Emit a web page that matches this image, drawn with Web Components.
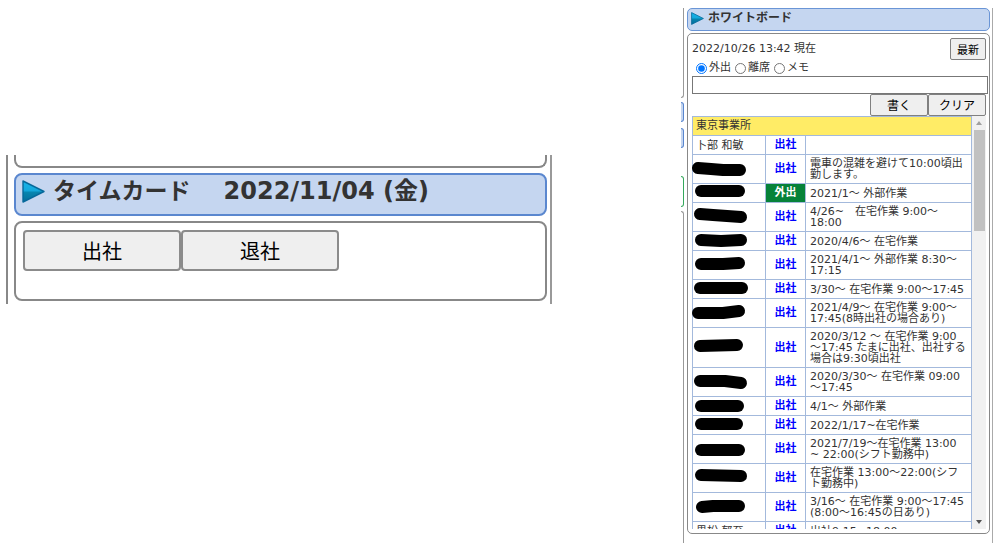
<!DOCTYPE html>
<html lang="ja">
<head>
<meta charset="utf-8">
<title>ホワイトボード</title>
<style>
body { margin: 0; background: #fff; color: #333; font-family: "DejaVu Sans", "Noto Sans CJK JP", sans-serif; }
</style>
</head>
<body>
<portal-page></portal-page>

<template id="t-page">
<style>
:host { display: grid; grid-template-columns: minmax(0, 546fr) minmax(0, 312fr); column-gap: 129px; align-items: start; padding: 8px 7px 8px 6px; }
time-card { margin-top: 147px; }
</style>
<time-card></time-card>
<white-board></white-board>
</template>

<template id="t-title">
<style>
:host { display: flex; align-items: flex-start; box-sizing: border-box; border: 1px solid #6a95d6; border-radius: 5px; background: #c5d6f0; height: 23px; padding: 2px 3px; gap: 4px; font-size: 12px; line-height: 14px; font-weight: 700; white-space: nowrap; }
:host([large]) { border: 2px solid #5a87cf; border-radius: 8px; height: 43px; padding: 3px 6px; gap: 8px; font-size: 23px; line-height: 26px; }
svg { flex: none; width: 13px; height: 13px; margin-top: 1px; }
:host([large]) svg { width: 23px; height: 23px; margin-top: 2px; }
h2 { margin: 0; font: inherit; }
</style>
<svg viewBox="0 0 23 23" aria-hidden="true">
<defs><linearGradient id="g" x1="0" y1="0" x2="0" y2="1"><stop offset="0" stop-color="#14b4ea"/><stop offset=".45" stop-color="#14a8dc"/><stop offset=".55" stop-color="#0784ae"/><stop offset="1" stop-color="#056f9b"/></linearGradient></defs>
<path d="M1 1 L22 11.5 L1 22 Z" fill="url(#g)" stroke="#07699b" stroke-width="1.4" stroke-linejoin="round"/>
</svg>
<h2><slot></slot></h2>
</template>

<template id="t-card">
<style>
:host { display: flex; flex-direction: column; gap: 5px; box-sizing: border-box; border: 2px solid #999; border-width: 0 2px; padding: 0 3px 3px 6px; border-left-color: #888; }
.prev { height: 11px; border: 2px solid #888; border-top: 0; border-radius: 0 0 8px 8px; }
.body { display: flex; box-sizing: border-box; height: 80px; border: 2px solid #888; border-radius: 8px; padding: 7px; align-items: flex-start; }
button { flex: 0 1 158px; min-width: 0; box-sizing: border-box; height: 41px; padding: 0; border: 2px solid #8b8b8b; border-radius: 4px; background: #efefef; color: #000; font: 20px/28px "Noto Sans CJK JP", sans-serif; }
.date { font-size: 24px; margin-left: 10px; }
</style>
<div class="prev"></div>
<widget-title large>タイムカード　<span class="date">2022/11/04 (金)</span></widget-title>
<div class="body"><button type="button">出社</button><button type="button">退社</button></div>
</template>

<template id="t-board">
<style>
:host { display: flex; gap: 3px; height: 535px; box-sizing: border-box; border-right: 1px solid #aaa; padding-right: 2px; }
.strip { display: flex; flex-direction: column; flex: none; width: 3px; }
.strip div { border: 1px solid #999; border-left: 0; border-radius: 0 4px 4px 0; box-sizing: border-box; }
.strip .a { height: 90px; border-top: 0; border-top-right-radius: 0; }
.strip .b { height: 20px; margin-top: 4px; border-color: #5a87cf; background: #c5d6f0; }
.strip .c { height: 20px; margin-top: 6px; border-color: #5a87cf; background: #c5d6f0; }
.strip .d { height: 31px; margin-top: 28px; border-color: #35a85c; }
.strip .e { flex: 1; margin-top: 4px; border-bottom: 0; border-bottom-right-radius: 0; }
.main { flex: 1; min-width: 0; }
.body { margin-top: 2px; border: 1px solid #888; border-radius: 5px; padding: 4px 1px 4px 4px; font-size: 11px; line-height: 14px; }
.row { display: flex; justify-content: space-between; align-items: center; padding-right: 2px; }
.radios { display: flex; align-items: center; height: 16px; padding-left: 4px; gap: 4px; }
label { display: flex; align-items: center; gap: 2px; }
input[type=radio] { margin: 0; width: 11px; height: 11px; accent-color: #0075ff; }
input[type=text] { display: block; box-sizing: border-box; width: 100%; height: 18px; border: 1px solid #777; padding: 0 2px; font: inherit; }
button { box-sizing: border-box; height: 22px; padding: 0; border: 1px solid #808080; border-radius: 2px; background: #efefef; color: #000; font: 12px/16px "Noto Sans CJK JP", sans-serif; }
.now { width: 36px; font-size: 11px; }
.acts { display: flex; justify-content: flex-end; padding-right: 2px; }
.acts button { width: 58px; }
.list { display: flex; height: 413px; overflow: hidden; padding-right: 2px; }
status-table { flex: 1; min-width: 0; }
.bar { flex: none; width: 14px; background: #f1f1f1; display: flex; flex-direction: column; align-items: center; }
.bar i { flex: none; border: 3px solid transparent; border-top-width: 0; border-bottom: 4px solid #a0a0a0; margin: 5px 0; }
.bar b { width: 11px; height: 101px; background: #c1c1c1; }
.bar i.dn { margin-top: auto; border-bottom-width: 0; border-top: 4px solid #505050; }
</style>
<div class="strip"><div class="a"></div><div class="b"></div><div class="c"></div><div class="d"></div><div class="e"></div></div>
<div class="main">
<widget-title>ホワイトボード</widget-title>
<div class="body">
<div class="row"><span>2022/10/26 13:42 現在</span><button class="now" type="button">最新</button></div>
<div class="radios">
<label><input type="radio" name="kind" checked>外出</label>
<label><input type="radio" name="kind">離席</label>
<label><input type="radio" name="kind">メモ</label>
</div>
<input type="text" aria-label="内容">
<div class="acts"><button type="button">書く</button><button type="button">クリア</button></div>
<div class="list"><status-table></status-table><div class="bar"><i></i><b></b><i class="dn"></i></div></div>
</div>
</div>
</template>

<template id="t-table">
<style>
:host { display: block; }
table { width: 100%; border-collapse: collapse; table-layout: fixed; font-size: 11px; line-height: 11px; }
col.n { width: 73px; } col.s { width: 40px; }
td, th { border: 1px solid #a3b9dc; padding: 3px 4px; text-align: left; font-weight: 400; white-space: nowrap; color: #333; }
td:first-child, th { padding-left: 3px; }
thead th { background: #ffec66; }
th, td.st { line-height: 12px; }
td.nm { position: relative; }
td.st { text-align: center; color: #00f; font-weight: 700; padding-left: 0; padding-right: 0; }
td.out { background: #068239; color: #fff; }
svg { position: absolute; left: 0; top: 0; width: 73px; height: 100%; overflow: visible; }
path { fill: none; stroke: #000; stroke-width: 12; stroke-linecap: round; stroke-linejoin: round; }
</style>
<table>
<colgroup><col class="n"><col class="s"><col></colgroup>
<thead><tr><th colspan="3">東京事業所</th></tr></thead>
<tbody></tbody>
</table>
</template>

<script>
const define = (name, id, init) => customElements.define(name, class extends HTMLElement {
  constructor() {
    super();
    const root = this.attachShadow({ mode: "open" });
    root.append(document.getElementById(id).content.cloneNode(true));
    if (init) init(root);
  }
});

// name (or the marker stroke that hides it), status, note lines
const rows = [
  ["卜部 和敏", "出社", ""],
  [{ d: "M5 13 L18 14 L30 15 L47 15" }, "出社", "電車の混雑を避けて10:00頃出|勤します。"],
  [{ d: "M8 7 L46 7" }, "外出", "2021/1〜 外部作業"],
  [{ d: "M7 11 L20 12 L48 14" }, "出社", "4/26~　在宅作業 9:00〜|18:00"],
  [{ d: "M8 8 L28 9 L48 8" }, "出社", "2020/4/6〜 在宅作業"],
  [{ d: "M8 13 L30 13 L46 12" }, "出社", "2021/4/1〜 外部作業 8:30〜|17:15"],
  [{ d: "M7 8 L49 8" }, "出社", "3/30〜 在宅作業 9:00〜17:45"],
  [{ d: "M5 14 L30 14 L46 12" }, "出社", "2021/4/9〜 在宅作業 9:00〜|17:45(8時出社の場合あり)"],
  [{ d: "M7 18 L44 17" }, "出社", "2020/3/12 〜 在宅作業 9:00|〜17:45 たまに出社、出社する|場合は9:30頃出社"],
  [{ d: "M7 13 L32 13 L48 15" }, "出社", "2020/3/30〜 在宅作業 09:00|〜17:45"],
  [{ d: "M8 9 L45 9" }, "出社", "4/1〜 外部作業"],
  [{ d: "M8 8 L44 8" }, "出社", "2022/1/17~在宅作業"],
  [{ d: "M8 15 L46 15" }, "出社", "2021/7/19〜在宅作業 13:00|~ 22:00(シフト勤務中)"],
  [{ d: "M8 11 L48 12" }, "出社", "在宅作業 13:00〜22:00(シフ|ト勤務中)"],
  [{ d: "M9 14 L20 13 L46 13" }, "出社", "3/16〜 在宅作業 9:00〜17:45|(8:00〜16:45の日あり)"],
  ["黒松 郁至", "出社", "出社9:15~18:00"]
];

define("widget-title", "t-title");
define("status-table", "t-table", root => {
  root.querySelector("tbody").innerHTML = rows.map(([name, state, note]) =>
    `<tr><td class="nm">${name.d ? `<svg aria-hidden="true"><path d="${name.d}"/></svg>` : name}</td>` +
    `<td class="st${state === "外出" ? " out" : ""}">${state}</td><td>${note.replaceAll("|", "<br>")}</td></tr>`).join("");
});
define("time-card", "t-card");
define("white-board", "t-board");
define("portal-page", "t-page");
</script>
</body>
</html>
